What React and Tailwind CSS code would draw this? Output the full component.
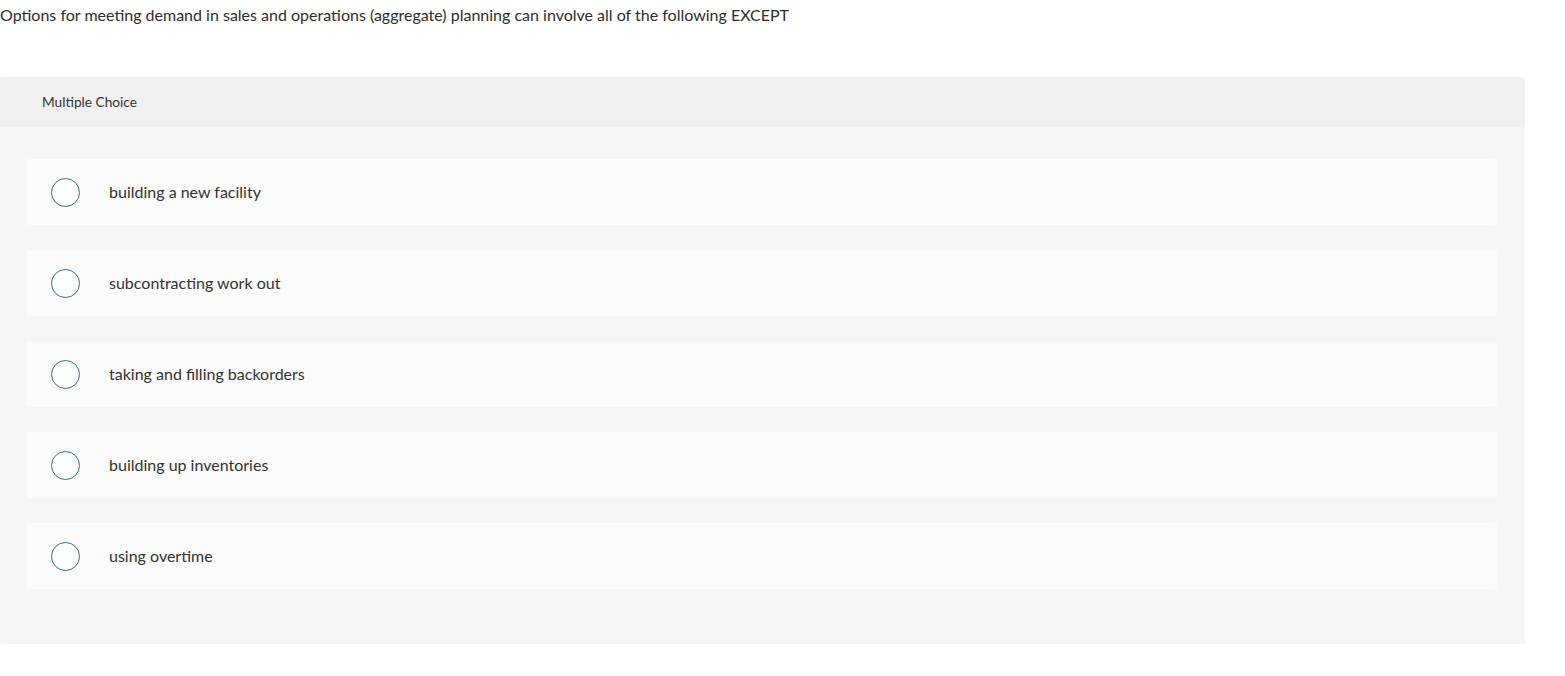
import React from "react";

const options = [
  "building a new facility",
  "subcontracting work out",
  "taking and filling backorders",
  "building up inventories",
  "using overtime",
];

const App = () => {
  return (
    <div className="w-[1565px] h-[676px] bg-white font-['Lato',sans-serif] text-[#333]">
      <p className="pt-[5px] text-[16px] leading-[20px] text-[#2d2d2d]">
        Options for meeting demand in sales and operations (aggregate) planning can involve all of the following EXCEPT
      </p>
      <div className="mt-[52px] w-[1525px] rounded-[3px] bg-[#f5f5f5] overflow-hidden">
        <div className="h-[50px] bg-[#f0f0f0] flex items-center pl-[42px] text-[13.7px] text-[#333]">
          Multiple Choice
        </div>
        <div className="flex flex-col gap-[25px] pt-[32px] pb-[55px] pl-[26px] pr-[28px]">
          {options.map((opt) => (
            <div
              key={opt}
              className="h-[66px] bg-[#fafafa] rounded-[3px] flex items-center pl-[25px]"
            >
              <span className="w-[29px] h-[29px] rounded-full border-[1.5px] border-[#3a6894] bg-white shrink-0" />
              <span className="ml-[29px] text-[16px] text-[#333]">{opt}</span>
            </div>
          ))}
        </div>
      </div>
    </div>
  );
};

export default App;
